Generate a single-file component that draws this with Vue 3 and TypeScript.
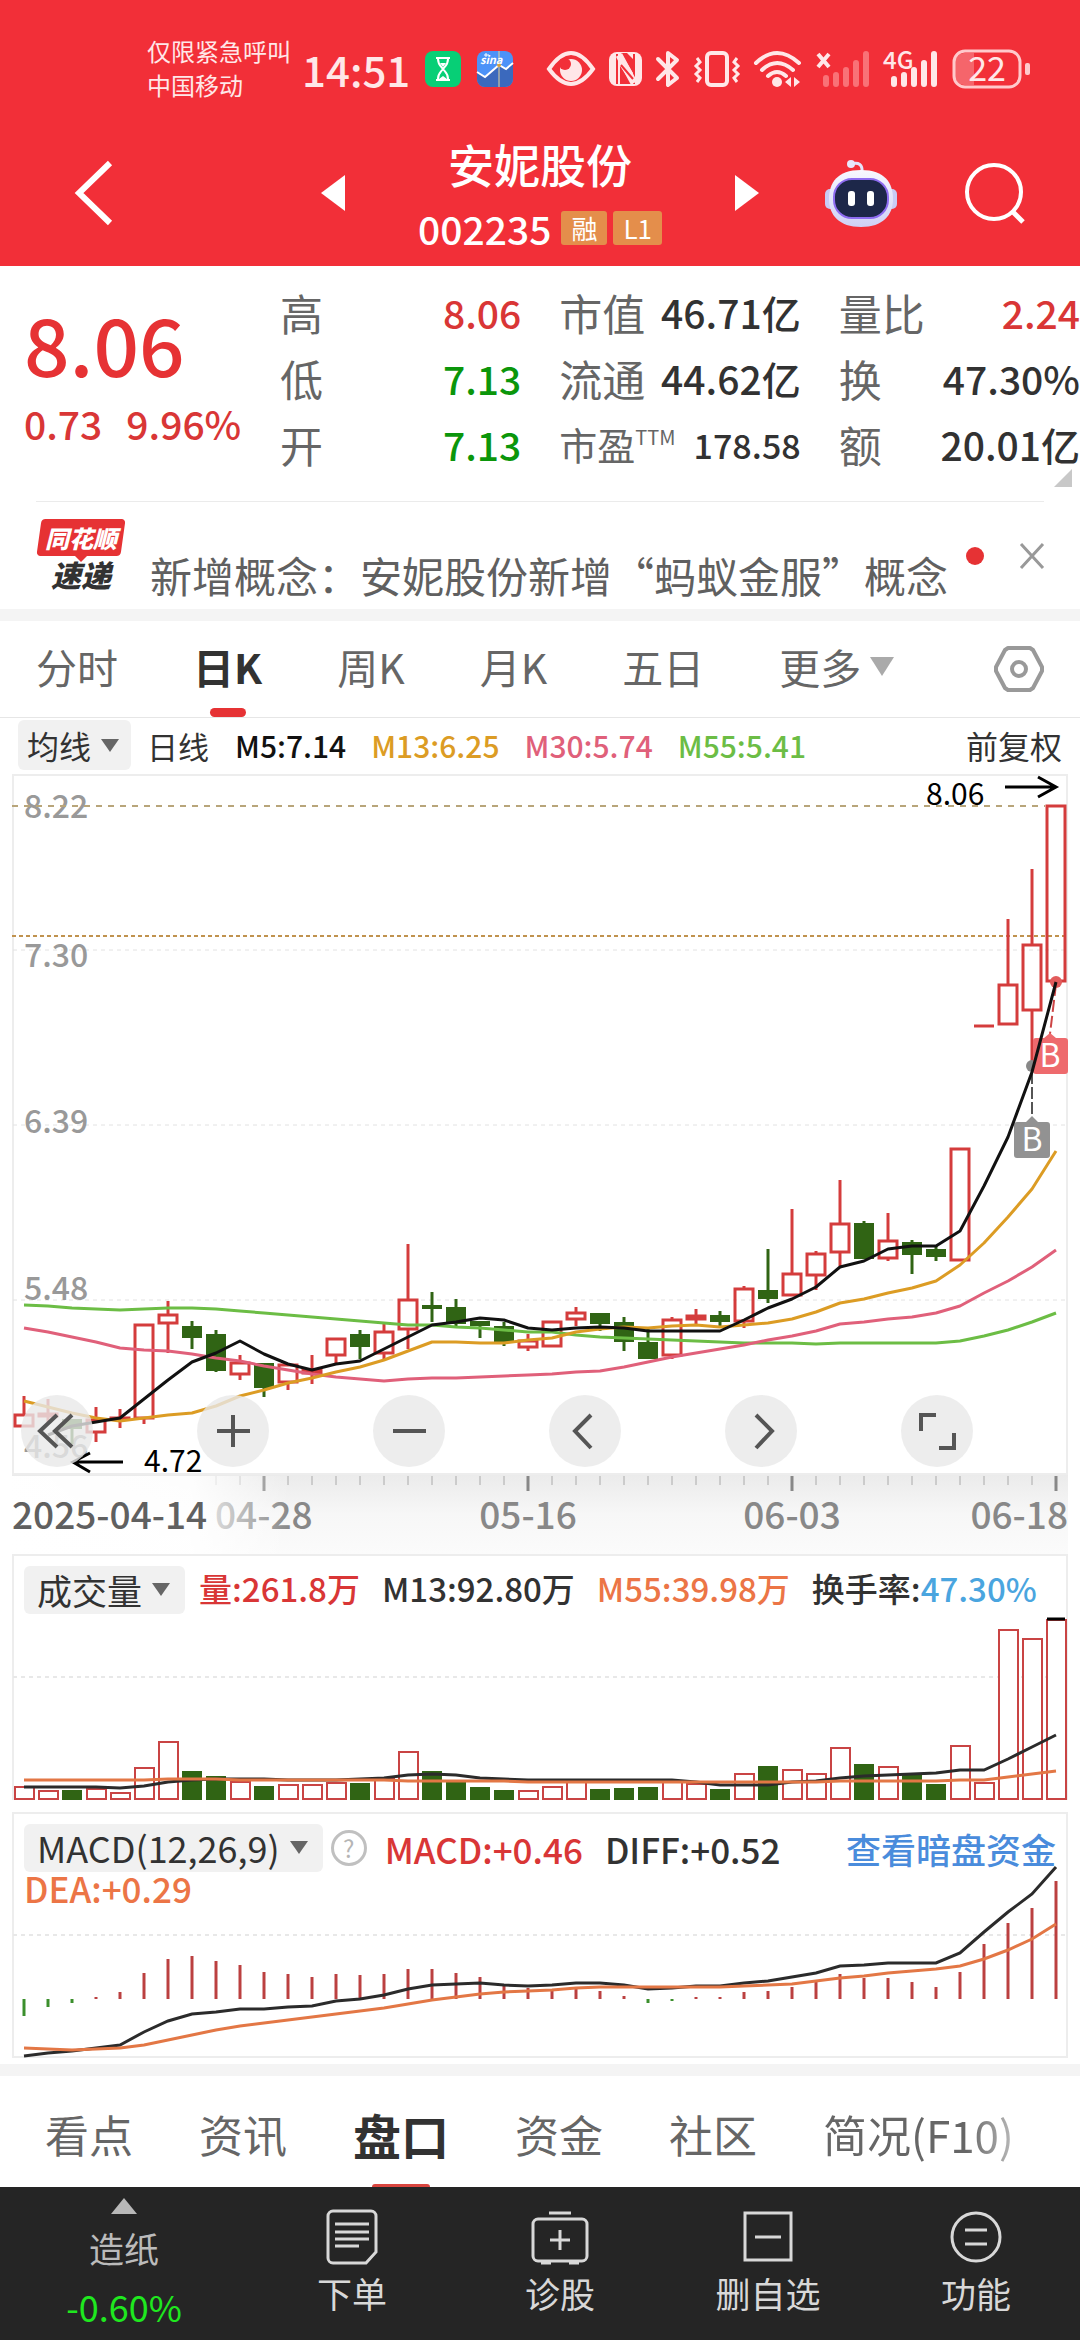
<script setup lang="ts">
import { ref } from 'vue'

type Candle = { up: boolean; high: number; top: number; bottom: number; low: number }

const step = 24
const xAt = (i: number): number => step + i * step

// up/down, high, body top, body bottom, low
const rawCandles: [number, number, number, number, number][] = [
  [1, 1396, 1415, 1426, 1426], [1, 1399, 1414, 1416, 1422], [0, 1419, 1419, 1429, 1444], [1, 1407, 1420, 1432, 1442],
  [1, 1409, 1418, 1419, 1428], [1, 1324, 1325, 1418, 1424], [1, 1301, 1315, 1323, 1353], [0, 1321, 1326, 1338, 1349],
  [0, 1330, 1334, 1371, 1372], [1, 1355, 1363, 1374, 1380], [0, 1363, 1363, 1388, 1397], [1, 1364, 1365, 1382, 1390],
  [1, 1355, 1370, 1373, 1384], [1, 1338, 1339, 1355, 1364], [0, 1330, 1334, 1347, 1359], [1, 1324, 1332, 1353, 1360],
  [1, 1244, 1300, 1329, 1349], [0, 1292, 1305, 1309, 1322], [0, 1299, 1307, 1324, 1326], [0, 1321, 1321, 1326, 1338],
  [0, 1322, 1326, 1342, 1346], [1, 1334, 1341, 1347, 1351], [1, 1321, 1322, 1346, 1346], [1, 1307, 1313, 1319, 1326],
  [0, 1313, 1313, 1324, 1331], [0, 1317, 1322, 1342, 1351], [0, 1327, 1342, 1359, 1359], [1, 1317, 1320, 1355, 1359],
  [1, 1309, 1316, 1319, 1325], [0, 1311, 1315, 1322, 1327], [1, 1286, 1289, 1321, 1328], [0, 1249, 1290, 1299, 1303],
  [1, 1209, 1274, 1295, 1295], [1, 1251, 1254, 1275, 1290], [1, 1180, 1224, 1252, 1266], [0, 1221, 1223, 1259, 1259],
  [1, 1213, 1241, 1258, 1261], [0, 1240, 1242, 1255, 1274], [0, 1246, 1249, 1257, 1261], [1, 1149, 1149, 1260, 1260],
  [1, 1026, 1026, 1026, 1026], [1, 919, 985, 1024, 1024], [1, 869, 945, 1010, 1065], [1, 806, 806, 981, 981],
]
const candles: Candle[] = rawCandles.map(([u, high, top, bottom, low]) => ({ up: u === 1, high, top, bottom, low }))

// a zero marks a day without a value
const points = (values: number[]): string =>
  values.map((v, i) => (v ? `${xAt(i)},${v}` : '')).filter(Boolean).join(' ')

const averages: { color: string; values: number[] }[] = [
  { color: '#6cbd45', values: [1305, 1306, 1308, 1309, 1310, 1309, 1308, 1308, 1309, 1311, 1313, 1315, 1317, 1319, 1321, 1323, 1325, 1325, 1327, 1328, 1330, 1332, 1332, 1335, 1337, 1338, 1339, 1340, 1341, 1342, 1343, 1343, 1343, 1344, 1343, 1343, 1343, 1343, 1343, 1341, 1336, 1330, 1322, 1313] },
  { color: '#e0607a', values: [1328, 1332, 1337, 1342, 1348, 1350, 1351, 1354, 1358, 1361, 1366, 1370, 1374, 1377, 1379, 1381, 1379, 1378, 1378, 1377, 1376, 1375, 1374, 1372, 1371, 1367, 1362, 1357, 1353, 1349, 1345, 1340, 1336, 1331, 1324, 1322, 1319, 1317, 1313, 1306, 1293, 1281, 1267, 1250] },
  { color: '#dc9c24', values: [1401, 1407, 1413, 1418, 1421, 1418, 1415, 1413, 1406, 1396, 1390, 1383, 1378, 1372, 1367, 1360, 1351, 1342, 1342, 1343, 1343, 1340, 1338, 1332, 1329, 1327, 1328, 1326, 1325, 1327, 1325, 1323, 1319, 1312, 1303, 1299, 1293, 1288, 1281, 1265, 1243, 1217, 1189, 1151] },
  { color: '#111111', values: [0, 1435, 1426, 1422, 1418, 1399, 1380, 1362, 1353, 1341, 1354, 1364, 1370, 1364, 1361, 1349, 1337, 1325, 1322, 1318, 1320, 1328, 1330, 1328, 1327, 1328, 1331, 1331, 1331, 1331, 1320, 1308, 1299, 1287, 1267, 1261, 1249, 1246, 1246, 1231, 1186, 1137, 1072, 982] },
]

const volumes: number[] = [13, 9, 10, 11, 7, 32, 58, 29, 24, 18, 14, 15, 15, 17, 17, 21, 48, 29, 18, 13, 10, 9, 13, 18, 11, 12, 13, 18, 16, 11, 26, 34, 30, 26, 52, 36, 33, 26, 16, 54, 17, 170, 161, 180]
const volShort: number[] = [1787, 1787, 1787, 1787, 1788, 1786, 1782, 1780, 1779, 1779, 1779, 1780, 1780, 1780, 1779, 1778, 1775, 1774, 1775, 1778, 1779, 1780, 1780, 1780, 1780, 1780, 1780, 1780, 1782, 1785, 1785, 1785, 1782, 1781, 1778, 1776, 1775, 1774, 1773, 1770, 1770, 1759, 1747, 1735]
const volLong: number[] = [1780, 1780, 1780, 1780, 1780, 1780, 1779, 1779, 1779, 1780, 1780, 1780, 1780, 1780, 1780, 1780, 1781, 1781, 1781, 1781, 1781, 1782, 1782, 1782, 1782, 1782, 1782, 1782, 1782, 1782, 1782, 1782, 1782, 1782, 1781, 1781, 1781, 1781, 1781, 1780, 1780, 1777, 1774, 1771]

const macdZero = 1999
const macd: number[] = [-17, -8, -4, 2, 7, 26, 40, 43, 38, 34, 27, 25, 22, 25, 24, 25, 30, 30, 26, 22, 14, 11, 9, 10, 8, 3, -4, -2, 2, 2, 7, 8, 12, 17, 25, 21, 21, 17, 12, 27, 55, 76, 91, 118]
const diff: number[] = [2056, 2053, 2051, 2048, 2045, 2032, 2021, 2014, 2012, 2009, 2009, 2007, 2006, 2001, 1999, 1995, 1989, 1985, 1984, 1983, 1985, 1986, 1985, 1983, 1983, 1985, 1989, 1988, 1986, 1986, 1983, 1981, 1977, 1973, 1966, 1965, 1963, 1963, 1963, 1953, 1932, 1912, 1894, 1867]
const dea: number[] = [2048, 2049, 2050, 2049, 2048, 2045, 2040, 2035, 2030, 2026, 2023, 2020, 2017, 2014, 2011, 2008, 2004, 2000, 1997, 1994, 1992, 1991, 1990, 1988, 1987, 1987, 1987, 1987, 1987, 1987, 1986, 1985, 1984, 1981, 1978, 1976, 1973, 1971, 1969, 1966, 1959, 1950, 1939, 1924]

const ticks: number[] = Array.from({ length: 36 }, (_, i) => i + 8)
const isMajor = (i: number): boolean => (i + 1) % 11 === 0

const periods: string[] = ['分时', '日K', '周K', '月K', '五日']
const period = ref('日K')
const sections: string[] = ['看点', '资讯', '盘口', '资金', '社区', '简况(F10)']
const section = ref('盘口')
</script>

<template>
  <main class="page">
    <header class="top">
      <div class="status">
        <div class="carrier"><span>仅限紧急呼叫</span><span>中国移动</span></div>
        <span class="clock">14:51</span>
        <svg class="app" width="36" height="36" viewBox="0 0 36 36">
          <rect width="36" height="36" rx="8" fill="#07cf76" />
          <g fill="none" stroke="#fff" stroke-width="2"><path d="M11 7h14M11 29h14M13 8c0 6 3 7 5 10c-2 3-5 4-5 10M23 8c0 6-3 7-5 10c2 3 5 4 5 10" /></g>
          <path d="M14 28l4-3 4 3zM15 12h6l-3 4z" fill="#fff" />
        </svg>
        <svg class="app" width="36" height="36" viewBox="0 0 36 36">
          <rect width="36" height="36" rx="8" fill="#4c92f8" />
          <path d="M0 21l8 5L22 14l7 4 7-6v16a8 8 0 0 1-8 8H8a8 8 0 0 1-8-8z" fill="#3b69bd" />
          <path d="M0 21l8 5L22 14l7 4 7-6" fill="none" stroke="#fff" stroke-width="2" />
          <path d="M22 0v36" stroke="#e5d59a" /><circle cx="22" cy="14" r="2" fill="#d6a03d" />
          <text x="3" y="13" class="sina">sina</text><path d="M7 4h5M9 2v4" stroke="#fff" />
        </svg>
        <div class="signals">
          <svg width="48" height="36" viewBox="0 0 48 36"><path d="M2 18Q24-14 46 18Q24 48 2 18z" fill="none" stroke="#ffe7e8" stroke-width="4" /><circle cx="24" cy="19" r="11" fill="#ffe7e8" /><circle cx="18" cy="13" r="6" fill="#f22f38" /></svg>
          <svg width="33" height="36" viewBox="0 0 33 36"><rect y="1" width="33" height="34" rx="8" fill="#ffe7e8" /><path d="M8 3v30M25 3v30" fill="none" stroke="#f22f38" stroke-width="2" /><path d="M11 15v18h12zM12 2l12 20V8L18 2z" fill="#f22f38" /><path d="M10 4l15 28" stroke="#ffe7e8" stroke-width="7" /><path d="M12 14l12 14" stroke="#f22f38" stroke-width="2" /></svg>
          <svg width="24" height="36" viewBox="0 0 24 36"><path d="M2 8l19 19-9 7V2l9 7L2 28" fill="none" stroke="#ffe7e8" stroke-width="4" stroke-linejoin="round" stroke-linecap="round" /></svg>
          <svg width="46" height="36" viewBox="0 0 46 36"><rect x="13" y="2" width="20" height="32" rx="4" fill="none" stroke="#ffe7e8" stroke-width="4" /><path d="M3 7l3 4-4 4 4 4-4 4 4 4-3 4M43 7l-3 4 4 4-4 4 4 4-4 4 3 4" fill="none" stroke="#ffe7e8" stroke-width="3" /></svg>
          <svg width="48" height="36" viewBox="0 0 48 36"><g fill="none" stroke="#ffe7e8" stroke-width="4" stroke-linecap="round"><path d="M2 12q21-20 43 0M8 19q15-14 31 0M14 25q9-8 18 0" /></g><circle cx="23" cy="31" r="5" fill="#ffe7e8" /><path d="M37 26v10l-6-5zM40 26v10l6-5z" fill="#ffe7e8" /></svg>
          <svg width="54" height="36" viewBox="0 0 54 36"><path d="M2 3l11 13M13 3L2 16" stroke="#ffe7e8" stroke-width="4" /><path d="M10 27v6M20 24v9M30 19v14M40 12v21M50 3v30" stroke="#f97277" stroke-width="6" stroke-linecap="round" /></svg>
          <svg width="54" height="36" viewBox="0 0 54 36"><text x="-1" y="18" class="net">4G</text><path d="M10 28v5M20 24v9M30 19v14M40 12v21M50 3v30" stroke="#ffe7e8" stroke-width="6" stroke-linecap="round" /></svg>
          <svg width="78" height="40" viewBox="0 0 78 40"><path d="M12 4h10v32H12a9 9 0 0 1-9-9V13a9 9 0 0 1 9-9z" fill="#f5656b" /><rect x="2" y="2" width="66" height="36" rx="11" fill="none" stroke="#ffc9cb" stroke-width="3" /><rect x="73" y="14" width="5" height="12" rx="2" fill="#ffc9cb" /><text x="35" y="32" class="charge">22</text></svg>
        </div>
      </div>
      <div class="title-bar">
        <button class="plain back" aria-label="返回"><svg width="38" height="66" viewBox="0 0 38 66"><path d="M35 3L4 33l31 30" fill="none" stroke="#fff" stroke-width="6" /></svg></button>
        <div class="stock">
          <button class="plain" aria-label="上一只"><svg width="24" height="36" viewBox="0 0 24 36"><path d="M24 0v36L0 18z" fill="#fff" /></svg></button>
          <div class="names">
            <h1>安妮股份</h1>
            <div class="code"><span>002235</span><i>融</i><i>L1</i></div>
          </div>
          <button class="plain" aria-label="下一只"><svg width="24" height="36" viewBox="0 0 24 36"><path d="M0 0v36l24-18z" fill="#fff" /></svg></button>
        </div>
        <div class="tools">
          <button class="plain" aria-label="助手">
            <svg width="72" height="68" viewBox="0 0 72 68">
              <defs><linearGradient id="shell" x1="0" y1="0" x2="0" y2="1"><stop offset="0" stop-color="#f8f8ff" /><stop offset="1" stop-color="#cfd0f5" /></linearGradient></defs>
              <path d="M26 5q12-3 11 8" fill="none" stroke="#e4e4fb" stroke-width="3" /><circle cx="26" cy="5" r="4" fill="#e8e8fb" />
              <rect x="0" y="30" width="12" height="20" rx="5" fill="#c9cbf5" /><rect x="60" y="30" width="12" height="20" rx="5" fill="#c9cbf5" />
              <path d="M36 11C60 11 68 24 68 40S58 68 36 68 4 56 4 40 12 11 36 11z" fill="url(#shell)" />
              <rect x="9" y="20" width="54" height="39" rx="18" fill="#1d2749" stroke="#8e6cf0" stroke-width="2" />
              <rect x="23" y="32" width="7" height="15" rx="3" fill="#fff" /><rect x="42" y="32" width="7" height="15" rx="3" fill="#fff" />
            </svg>
          </button>
          <button class="plain" aria-label="搜索"><svg width="60" height="62" viewBox="0 0 60 62"><circle cx="29" cy="30" r="27" fill="none" stroke="#fff" stroke-width="4" /><path d="M47 49l11 11" stroke="#fff" stroke-width="5" /></svg></button>
        </div>
      </div>
    </header>

    <section class="quote">
      <div class="price">
        <strong>8.06</strong>
        <p><span>0.73</span><span>9.96%</span></p>
      </div>
      <dl>
        <div><dt>高</dt><dd class="up">8.06</dd></div>
        <div><dt>低</dt><dd class="down">7.13</dd></div>
        <div><dt>开</dt><dd class="down">7.13</dd></div>
      </dl>
      <dl>
        <div><dt>市值</dt><dd>46.71亿</dd></div>
        <div><dt>流通</dt><dd>44.62亿</dd></div>
        <div class="compact"><dt>市盈<sup>TTM</sup></dt><dd>178.58</dd></div>
      </dl>
      <dl>
        <div><dt>量比</dt><dd class="up">2.24</dd></div>
        <div><dt>换</dt><dd>47.30%</dd></div>
        <div><dt>额</dt><dd>20.01亿</dd></div>
      </dl>
      <svg class="corner" width="18" height="18" viewBox="0 0 18 18"><path d="M18 0v18H0z" fill="#c8c8c8" /></svg>
    </section>

    <section class="news">
      <div class="brand"><b>同花顺</b><em>速递</em></div>
      <a href="#">新增概念：安妮股份新增“蚂蚁金服”概念</a>
      <span class="dot"></span>
      <button class="plain" aria-label="关闭"><svg width="24" height="26" viewBox="0 0 24 26"><path d="M1 1l22 24M23 1L1 25" stroke="#999" stroke-width="3" /></svg></button>
    </section>

    <nav class="periods">
      <button v-for="p in periods" :key="p" class="plain" :class="{ on: p === period }" @click="period = p">{{ p }}</button>
      <button class="plain more">更多<svg width="24" height="19" viewBox="0 0 24 19"><path d="M0 0h24L12 19z" fill="#aaa" /></svg></button>
      <button class="plain settings" aria-label="设置"><svg width="50" height="48" viewBox="0 0 50 48"><path d="M14 3h22l3 2 9 17v4l-9 17-3 2H14l-3-2-9-17v-4l9-17z" fill="none" stroke="#999" stroke-width="4" stroke-linejoin="round" /><circle cx="25" cy="24" r="7" fill="none" stroke="#999" stroke-width="4" /></svg></button>
    </nav>

    <div class="ma-row">
      <button class="picker">均线<svg width="18" height="13" viewBox="0 0 18 13"><path d="M0 0h18L9 13z" fill="#666" /></svg></button>
      <span class="kind">日线</span>
      <span class="m5">M5:7.14</span><span class="m13">M13:6.25</span><span class="m30">M30:5.74</span><span class="m55">M55:5.41</span>
      <span class="adjust">前复权</span>
    </div>

    <section class="stack">
      <svg class="chart" viewBox="0 772 1080 782">
        <defs>
          <linearGradient id="floor" x1="0" y1="0" x2="0" y2="1"><stop offset="0" stop-color="#ebebeb" /><stop offset=".5" stop-color="#f7f7f7" /><stop offset="1" stop-color="#fbfbfb" /></linearGradient>
          <linearGradient id="fade" x1="0" y1="0" x2="1" y2="0"><stop offset="0" stop-color="#fff" /><stop offset=".66" stop-color="#fff" stop-opacity=".9" /><stop offset="1" stop-color="#fff" stop-opacity="0" /></linearGradient>
        </defs>
        <rect x="13" y="775" width="1054" height="699" fill="none" stroke="#ededed" stroke-width="2" />
        <path d="M13 950H1066M13 1125H1066M13 1300H1066" stroke="#e2e2e2" stroke-width="1" stroke-dasharray="4 4" />
        <g class="scale"><text x="24" y="818">8.22</text><text x="24" y="967">7.30</text><text x="24" y="1133">6.39</text><text x="24" y="1300">5.48</text><text x="24" y="1458">4.56</text></g>
        <path d="M12 806H1045" stroke="#b8a57a" stroke-width="2" stroke-dasharray="6 6" />
        <path d="M12 936H1066" stroke="#c0924e" stroke-width="2" stroke-dasharray="4 3" />
        <g v-for="(c, i) in candles" :key="i" :stroke="c.up ? '#d43c3c' : '#306414'" stroke-width="3">
          <path v-if="c.high < c.top" :d="`M${xAt(i)} ${c.high}V${c.top}`" />
          <path v-if="c.low > c.bottom" :d="`M${xAt(i)} ${c.bottom}V${c.low}`" />
          <path v-if="c.top === c.bottom" :d="`M${xAt(i) - 10} ${c.top}h20`" />
          <rect v-else-if="c.up" :x="xAt(i) - 9" :y="c.top" width="18" :height="c.bottom - c.top" fill="none" />
          <rect v-else :x="xAt(i) - 10" :y="c.top" width="20" :height="c.bottom - c.top" fill="#306414" stroke="none" />
        </g>
        <g>
          <circle cx="1056" cy="982" r="6" fill="#e25c5c" /><circle cx="1032" cy="1066" r="6" fill="#888" />
          <path d="M1056 984L1050 1034" stroke="#c44" stroke-width="2" stroke-dasharray="12 4" /><path d="M1032 1072V1118" stroke="#555" stroke-width="2" stroke-dasharray="12 3" />
          <path d="M1036 1038h8l6-5 6 5h9a3 3 0 0 1 3 3v30a3 3 0 0 1-3 3h-29a3 3 0 0 1-3-3v-30a3 3 0 0 1 3-3z" fill="#ee6a6d" />
          <path d="M1017 1122h9l6-6 6 6h9a3 3 0 0 1 3 3v30a3 3 0 0 1-3 3h-30a3 3 0 0 1-3-3v-30a3 3 0 0 1 3-3z" fill="#929292" />
          <text x="1050" y="1067" class="mark">B</text><text x="1032" y="1151" class="mark">B</text>
        </g>
        <polyline v-for="a in averages" :key="a.color" :points="points(a.values)" fill="none" :stroke="a.color" stroke-width="3" stroke-linejoin="round" />
        <text x="926" y="805" class="note">8.06</text><path d="M1005 787H1056M1038 777l18 10-18 10" class="arrow" />
        <text x="144" y="1472" class="note">4.72</text><path d="M123 1462H73M90 1453l-17 9 17 10" class="arrow" />
        <rect x="12" y="1475" width="1056" height="79" fill="url(#floor)" />
        <path v-for="i in ticks" :key="i" :d="`M${xAt(i)} 1476v${isMajor(i) ? 15 : 9}`" :stroke="isMajor(i) ? '#888' : '#aaa'" :stroke-width="isMajor(i) ? 3 : 1" />
        <g class="dates">
          <text x="215" y="1529">04-28</text><text x="528" y="1529" text-anchor="middle">05-16</text><text x="792" y="1529" text-anchor="middle">06-03</text><text x="1068" y="1529" text-anchor="end">06-18</text>
          <rect x="0" y="1476" width="290" height="78" fill="url(#fade)" />
          <text x="12" y="1529" class="first">2025-04-14</text>
        </g>
      </svg>
      <div class="controls">
        <button aria-label="最早"><svg viewBox="0 0 72 72"><path d="M36 20L19 36l17 16M51 20L34 36l17 16" /></svg></button>
        <button aria-label="放大"><svg viewBox="0 0 72 72"><path d="M20 36h33M36 20v32" /></svg></button>
        <button aria-label="缩小"><svg viewBox="0 0 72 72"><path d="M20 36h33" /></svg></button>
        <button aria-label="向左"><svg viewBox="0 0 72 72"><path d="M42 20L26 36l16 17" /></svg></button>
        <button aria-label="向右"><svg viewBox="0 0 72 72"><path d="M31 20l16 16-16 17" /></svg></button>
        <button aria-label="全屏"><svg viewBox="0 0 72 72"><path d="M20 36V20h15M53 38v15H38" /></svg></button>
      </div>
    </section>

    <section class="stack">
      <svg class="chart" viewBox="0 1554 1080 258">
        <path d="M13 1800V1555H1067V1800" fill="none" stroke="#ededed" stroke-width="2" />
        <path d="M13 1677H1066" stroke="#e8e8e8" stroke-width="2" stroke-dasharray="4 4" />
        <template v-for="(v, i) in volumes" :key="i">
          <rect v-if="candles[i].up" :x="xAt(i) - 9" :y="1800 - v" width="19" :height="v - 1" fill="#fff" stroke="#c94444" stroke-width="2" />
          <rect v-else :x="xAt(i) - 10" :y="1800 - v" width="20" :height="v" fill="#306414" />
        </template>
        <polyline :points="points(volShort)" fill="none" stroke="#2b2b2b" stroke-width="3" />
        <polyline :points="points(volLong)" fill="none" stroke="#e37745" stroke-width="3" />
        <path d="M1047 1619H1065" stroke="#000" stroke-width="3" />
      </svg>
      <div class="legend">
        <button class="picker">成交量<svg width="18" height="13" viewBox="0 0 18 13"><path d="M0 0h18L9 13z" fill="#666" /></svg></button>
        <div class="figures"><span class="up">量:261.8万</span><span>M13:92.80万</span><span class="orange">M55:39.98万</span><span>换手率:<b>47.30%</b></span></div>
      </div>
    </section>

    <section class="stack">
      <svg class="chart" viewBox="0 1812 1080 252">
        <rect x="13" y="1813" width="1054" height="244" fill="none" stroke="#ededed" stroke-width="2" />
        <path d="M13 1935H1066" stroke="#e8e8e8" stroke-width="2" stroke-dasharray="4 4" />
        <path v-for="(v, i) in macd" :key="i" :d="`M${xAt(i)} ${macdZero}v${-v}`" :stroke="v > 0 ? '#bb4040' : '#3b8f2c'" stroke-width="3" />
        <polyline :points="points(diff)" fill="none" stroke="#2b2b2b" stroke-width="3" />
        <polyline :points="points(dea)" fill="none" stroke="#e37745" stroke-width="3" />
      </svg>
      <div class="legend macd">
        <button class="picker">MACD(12,26,9)<svg width="18" height="13" viewBox="0 0 18 13"><path d="M0 0h18L9 13z" fill="#666" /></svg></button>
        <button class="help" aria-label="说明">?</button>
        <span class="up">MACD:+0.46</span><span>DIFF:+0.52</span>
        <a href="#">查看暗盘资金</a>
        <span class="orange dea">DEA:+0.29</span>
      </div>
    </section>

    <nav class="sections">
      <button v-for="s in sections" :key="s" class="plain" :class="{ on: s === section }" @click="section = s">{{ s }}</button>
    </nav>

    <footer class="bottom">
      <button class="plain sector">
        <svg width="26" height="16" viewBox="0 0 26 16"><path d="M13 0l13 16H0z" fill="#b8b8b8" /></svg>
        <span>造纸</span><b>-0.60%</b>
      </button>
      <button class="plain"><svg width="56" height="56" viewBox="0 0 56 56"><path d="M9 2h38a5 5 0 0 1 5 5v36L42 54H9a5 5 0 0 1-5-5V7a5 5 0 0 1 5-5z" /><path d="M11 15h34M11 23h34M11 30h34M11 37h24" /></svg>下单</button>
      <button class="plain"><svg width="58" height="56" viewBox="0 0 58 56"><rect x="2" y="10" width="54" height="42" rx="5" /><path d="M18 4h22M19 31h20M29 21v20M10 54h10M38 54h10" /></svg>诊股</button>
      <button class="plain"><svg width="56" height="56" viewBox="0 0 56 56"><rect x="5" y="4" width="46" height="47" /><path d="M15 28h26" /></svg>删自选</button>
      <button class="plain"><svg width="56" height="56" viewBox="0 0 56 56"><circle cx="28" cy="28" r="24" /><path d="M17 21h22M17 35h22" /></svg>功能</button>
    </footer>
  </main>
</template>

<style>
body { margin: 0; background: #fff; }
</style>

<style scoped>
.page { font-family: "Noto Sans CJK SC", "Noto Sans", sans-serif; color: #323232; background: #fff; width: 100%; overflow: hidden; }
button { font-family: inherit; color: inherit; }
.plain { background: none; border: 0; padding: 0; margin: 0; display: flex; align-items: center; font-size: inherit; }
svg { display: block; flex: none; overflow: visible; }
a { text-decoration: none; color: inherit; }
.up { color: #d93636; }
.down { color: #0b960b; }
.orange { color: #ec7546; }

.top { background: #f22f38; color: #fff; }
.status { display: flex; align-items: center; height: 70px; padding: 34px 50px 0 147px; color: #ffe7e8; }
.carrier { display: flex; flex-direction: column; font-size: 24px; line-height: 34px; width: 144px; padding-bottom: 2px; }
.clock { font-size: 42px; line-height: 48px; margin: 0 15px 0 11px; font-weight: 500; }
.app + .app { margin-left: 16px; }
.sina { font-size: 11px; font-weight: 700; font-style: italic; fill: #fff; }
.signals { display: flex; align-items: center; gap: 14px; margin-left: auto; }
.net { font-size: 24px; font-weight: 500; fill: #ffe7e8; }
.charge { font-size: 34px; fill: #ffe7e8; text-anchor: middle; }
.title-bar { display: grid; grid-template-columns: 1fr auto 1fr; align-items: center; height: 146px; padding-top: 16px; }
.back { margin-left: 75px; }
.stock { display: flex; align-items: center; justify-content: space-between; width: 438px; }
.names { display: flex; flex-direction: column; align-items: center; gap: 6px; }
.names h1 { font-size: 46px; line-height: 64px; font-weight: 500; margin: 0; }
.code { display: flex; align-items: center; gap: 6px; font-size: 39px; line-height: 54px; font-weight: 500; }
.code span { margin-right: 4px; }
.code i { font-style: normal; font-weight: 400; background: #e48e4b; font-size: 26px; line-height: 34px; min-width: 24px; padding: 0 10px; border-radius: 3px; text-align: center; }
.tools { display: flex; align-items: center; justify-content: flex-end; gap: 68px; padding-right: 55px; }

.quote { position: relative; display: grid; grid-template-columns: 242px 1fr 1fr 1fr; column-gap: 38px; height: 222px; padding-top: 13px; }
.price { padding-left: 24px; color: #e63234; white-space: nowrap; }
.price strong { display: block; font-size: 80px; line-height: 100px; margin-top: 13px; font-weight: 500; }
.price p { display: flex; gap: 24px; margin: 5px 0 0; font-size: 39px; line-height: 52px; font-weight: 500; color: #d93636; }
dl { margin: 0; }
dl div { display: flex; justify-content: space-between; align-items: center; height: 66px; white-space: nowrap; }
dt { font-size: 43px; color: #666; }
dd { margin: 0; font-size: 39px; font-weight: 500; }
.compact dt { font-size: 38px; display: flex; align-items: flex-start; line-height: 54px; }
.compact sup { font-size: 20px; line-height: 40px; }
.compact dd { font-size: 34px; }
.corner { position: absolute; right: 8px; bottom: 14px; }

.news { display: flex; align-items: center; height: 107px; border-top: 1px solid #ebebeb; margin: 0 36px; }
.brand { width: 90px; display: flex; flex-direction: column; align-items: center; }
.brand b { position: relative; z-index: 0; font-size: 24px; line-height: 37px; width: 84px; text-align: center; color: #fff; font-style: italic; font-weight: 900; }
.brand b::before { content: ""; position: absolute; inset: 0; z-index: -1; background: #e63234; border-radius: 4px; transform: skewX(-8deg); }
.brand b::after { content: ""; position: absolute; left: 36px; top: 37px; border: 6px solid transparent; border-top-color: #e63234; border-bottom: 0; }
.brand em { font-size: 30px; line-height: 36px; font-weight: 900; }
.news a { font-size: 42px; line-height: 68px; align-self: flex-end; color: #606060; margin-left: 24px; white-space: nowrap; }
.dot { width: 18px; height: 18px; border-radius: 50%; background: #e63234; margin-left: 18px; }
.news .plain { margin-left: auto; }

.periods { display: flex; align-items: stretch; gap: 75px; height: 96px; padding: 0 36px; border-top: 12px solid #f4f4f4; border-bottom: 1px solid #e6e6e6; font-size: 41px; color: #666; }
.periods .plain { white-space: nowrap; padding-bottom: 6px; }
.periods .on { position: relative; color: #323232; font-weight: 700; }
.periods .on::after { content: ""; position: absolute; left: 50%; bottom: 0; width: 36px; height: 9px; margin-left: -18px; border-radius: 5px; background: #e63234; }
.more svg { margin-left: 9px; }
.periods .settings { margin-left: auto; padding-bottom: 0; }

.ma-row { display: flex; align-items: center; height: 54px; padding: 0 18px; font-size: 30px; font-weight: 500; white-space: nowrap; }
.picker { display: flex; align-items: center; gap: 10px; height: 50px; border: 0; border-radius: 6px; background: #f1f1f1; font-size: 32px; padding: 0 12px 0 9px; }
.kind { font-size: 31px; font-weight: 400; margin: 0 26px 0 16px; }
.m5, .m13, .m30 { margin-right: 25px; }
.m5 { color: #111; }
.m13 { color: #dc9c24; }
.m30 { color: #e0607a; }
.m55 { color: #6cbd45; }
.adjust { margin-left: auto; font-size: 32px; font-weight: 400; }

.stack { display: grid; }
.stack > * { grid-area: 1 / 1; min-width: 0; }
.chart { width: 100%; height: auto; }
.scale { font-size: 32px; font-weight: 500; fill: #999; }
.note { font-size: 30px; fill: #000; }
.arrow { fill: none; stroke: #000; stroke-width: 3; }
.mark { font-size: 32px; fill: #fff; text-anchor: middle; }
.dates { font-size: 37px; font-weight: 500; fill: #888; }
.first { fill: #606060; }
.controls { display: flex; gap: 104px; align-self: end; margin: 0 0 87px 21px; }
.controls button { width: 72px; height: 72px; border: 0; padding: 0; border-radius: 50%; background: rgba(232, 232, 232, 0.8); }
.controls path { fill: none; stroke: #555; stroke-width: 4; }

.legend { display: flex; align-items: center; align-self: start; margin: 12px 24px 0; height: 48px; font-size: 33px; white-space: nowrap; }
.legend .picker { font-size: 35px; height: 48px; padding: 0 15px 2px 13px; }
.figures { display: flex; gap: 22px; margin-left: 14px; padding-bottom: 4px; font-weight: 500; }
.figures b { font-weight: 500; color: #4aa5df; }
.legend.macd { display: grid; grid-template-columns: auto auto auto auto 1fr; height: auto; grid-template-rows: 48px 32px; font-size: 35px; font-weight: 500; }
.macd .picker { font-size: 36px; }
.help { width: 36px; height: 36px; border: 3px solid #c0c0c0; border-radius: 50%; background: none; color: #b5b5b5; font-size: 24px; line-height: 30px; padding: 0; margin: 0 18px 0 8px; }
.macd span + span { margin-left: 22px; }
.macd a { justify-self: end; color: #4a8cdc; }
.macd .dea { grid-column: 1; grid-row: 2; margin: 0; line-height: 30px; }

.sections { display: flex; align-items: stretch; gap: 66px; height: 111px; padding-left: 45px; border-top: 12px solid #f4f4f4; font-size: 44px; color: #666; white-space: nowrap; }
.sections .plain { padding-top: 4px; }
.sections .plain:last-child { background: linear-gradient(90deg, #666 75%, #bbb); background-clip: text; color: transparent; }
.sections .on { position: relative; color: #323232; font-size: 48px; font-weight: 700; }
.sections .on::after { content: ""; position: absolute; left: 50%; bottom: 0; width: 58px; height: 3px; margin-left: -29px; border-radius: 4px 4px 0 0; background: #d9453f; }

.bottom { display: grid; grid-template-columns: 248px repeat(4, 1fr); height: 153px; background: #252525; color: #d8d8d8; font-size: 35px; }
.bottom .plain { flex-direction: column; line-height: 50px; padding-top: 22px; gap: 3px; fill: none; stroke: #d8d8d8; stroke-width: 3; }
.bottom .sector { padding-top: 11px; gap: 6px; color: #bbb; stroke: none; }
.sector span { line-height: 56px; }
.sector b { font-weight: 400; font-size: 36px; line-height: 48px; color: #1fe81f; }
</style>
